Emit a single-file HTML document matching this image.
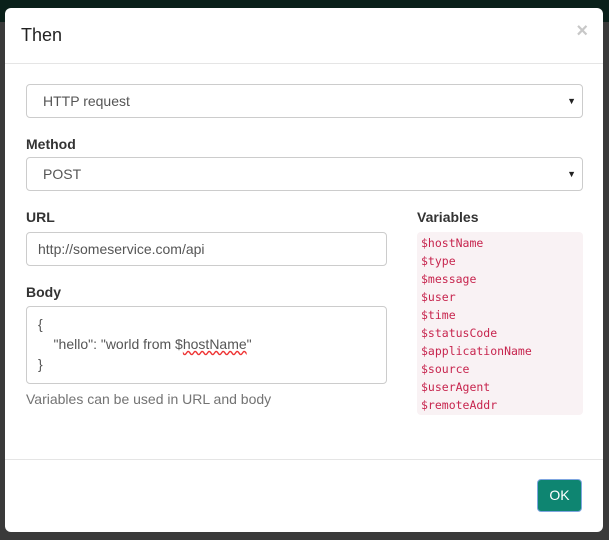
<!DOCTYPE html>
<html><head><style>
body{margin:0;width:609px;height:540px;background:#3a3a3a;position:relative;overflow:hidden;font-family:"Liberation Sans",Arial,sans-serif;color:#333;font-size:14px}
.nav{position:absolute;left:0;top:0;width:609px;height:22px;background:#0a201a}
.modal{position:absolute;left:5px;top:8px;width:598px;height:524px;background:#fff;border-radius:6px}
.hdr{position:absolute;left:0;top:0;width:598px;height:55px;border-bottom:1px solid #e5e5e5}
.hdr h4{margin:0;position:absolute;left:16px;top:17px;font-size:18px;font-weight:normal;color:#222}
.x{position:absolute;right:15px;top:12px;font-size:20px;font-weight:bold;color:#c8c8c8}
.sel,.inp{position:absolute;border:1px solid #ccc;border-radius:4px;box-sizing:border-box;background:#fff;font-size:14px;color:#555;padding-left:16px}
.sel:after{content:"▼";position:absolute;right:6px;top:50%;transform:translateY(-50%);font-size:9px;color:#222}
.lbl{position:absolute;font-weight:bold;font-size:14px;color:#333}
pre{position:absolute;margin:0;left:412px;top:224px;width:166px;height:183px;background:#f9f2f4;color:#c7254e;border-radius:4px;font-family:"DejaVu Sans Mono","Liberation Mono",monospace;font-size:11.5px;line-height:18px;padding:2px 0 0 4px;box-sizing:border-box}
.ftr{position:absolute;left:0;top:451px;width:598px;border-top:1px solid #e5e5e5}
.ok{position:absolute;left:532px;top:471px;width:45px;height:33px;background:#0e8571;border:1px solid #7fa6e0;border-radius:4px;box-sizing:border-box;color:#fff;font-size:14px;text-align:center;line-height:31px}
</style></head><body>
<div class="nav"></div>
<div class="modal">
<div class="hdr"><h4>Then</h4><div class="x">×</div></div>
<div class="sel" style="left:21px;top:76px;width:557px;height:34px;line-height:32px">HTTP request</div>
<div class="lbl" style="left:21px;top:128px">Method</div>
<div class="sel" style="left:21px;top:149px;width:557px;height:34px;line-height:32px">POST</div>
<div class="lbl" style="left:21px;top:201px">URL</div>
<div class="inp" style="left:21px;top:224px;width:361px;height:34px;line-height:32px;padding-left:11px">http://someservice.com/api</div>
<div class="lbl" style="left:21px;top:276px">Body</div>
<div class="inp" style="left:21px;top:298px;width:361px;height:78px;padding:7px 11px;line-height:20px">{<br>&nbsp;&nbsp;&nbsp;&nbsp;"hello": "world from $<span style="text-decoration:underline wavy #e33">hostName</span>"<br>}</div>
<div style="position:absolute;left:21px;top:383px;color:#737373;font-size:14px">Variables can be used in URL and body</div>
<div class="lbl" style="left:412px;top:201px">Variables</div>
<pre>$hostName
$type
$message
$user
$time
$statusCode
$applicationName
$source
$userAgent
$remoteAddr</pre>
<div class="ftr"></div>
<div class="ok">OK</div>
</div>
</body></html>
